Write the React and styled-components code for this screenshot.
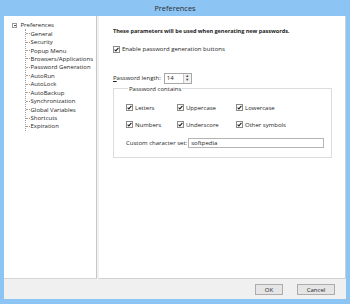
import React from "react";
import styled, { createGlobalStyle } from "styled-components";

const GlobalStyle = createGlobalStyle`
  html, body { margin: 0; padding: 0; }
  body { font-family: "Open Sans", "Noto Sans", sans-serif; color: #1e1e1e; }
  * { box-sizing: border-box; }
`;

const Window = styled.div`
  width: 350px;
  height: 304px;
  background: #8cc4f4;
  display: flex;
  flex-direction: column;
  padding: 0 4px 5px 4px;
`;

const TitleBar = styled.div`
  height: 16px;
  display: flex;
  align-items: center;
  justify-content: center;
  font-size: 7.4px;
  color: #2b2b2b;
`;

const Client = styled.div`
  flex: 1;
  background: #f0f0f0;
  display: flex;
  flex-direction: column;
`;

const Panes = styled.div`
  display: flex;
  height: 263px;
  gap: 2px;
`;

const TreePane = styled.div`
  width: 93px;
  background: #fff;
  border-right: 1px solid #c8c8c8;
  border-bottom: 1px solid #d6d6d6;
  padding: 5px 0 0 8px;
  font-size: 6px;
`;

const TreeRoot = styled.div`
  display: flex;
  align-items: center;
  height: 8.45px;
  gap: 3.5px;
`;

const Expander = styled.span`
  width: 5px;
  height: 5px;
  border: 1px solid #9a9a9a;
  position: relative;
  flex: none;
  &::after {
    content: "";
    position: absolute;
    left: 0.5px;
    right: 0.5px;
    top: 1px;
    height: 1px;
    background: #555;
  }
`;

const TreeChildren = styled.div`
  margin-left: 13px;
  border-left: 1px dotted #a0a0a0;
  display: flex;
  flex-direction: column;
`;

const TreeItem = styled.div`
  height: 8.45px;
  display: flex;
  align-items: center;
  gap: 1px;
  white-space: nowrap;
  &::before {
    content: "";
    width: 3.5px;
    border-top: 1px dotted #a0a0a0;
  }
`;

const ContentPane = styled.div`
  flex: 1;
  background: #fff;
  border-right: 1px solid #d0d0d0;
  border-bottom: 1px solid #d0d0d0;
  padding: 11px 0 0 14px;
  font-size: 6px;
  display: flex;
  flex-direction: column;
`;

const Heading = styled.div`
  font-weight: 700;
  font-size: 5.6px;
  letter-spacing: -0.05px;
  height: 9px;
  line-height: 9px;
`;

const CheckRow = styled.label`
  display: flex;
  align-items: center;
  gap: 2px;
  margin-top: ${(p) => p.$mt || 0}px;
`;

const Box = styled.span`
  width: 7px;
  height: 7px;
  border: 1px solid #8a8a8a;
  background: #fff;
  display: inline-flex;
  align-items: center;
  justify-content: center;
  flex: none;
`;

const Check = () => (
  <Box>
    <svg width="5" height="5" viewBox="0 0 5 5">
      <path d="M0.6 2.6 L1.9 3.9 L4.4 0.8" fill="none" stroke="#222" strokeWidth="1.1" />
    </svg>
  </Box>
);

const LengthRow = styled.div`
  display: flex;
  align-items: center;
  margin-top: 19.5px;
  gap: 3px;
`;

const Under = styled.span`
  text-decoration: underline;
`;

const SpinInput = styled.div`
  display: flex;
  align-items: center;
  height: 11px;
  border: 1px solid #a8a8a8;
  width: 28px;
  padding-left: 2px;
  justify-content: space-between;
`;

const Spinner = styled.div`
  width: 8px;
  height: 9px;
  border-left: 1px solid #c8c8c8;
  display: flex;
  flex-direction: column;
  align-items: center;
  justify-content: space-around;
  background: #f2f2f2;
  font-size: 4px;
  line-height: 4px;
  color: #444;
`;

const Group = styled.fieldset`
  margin: 1px 0 0 0;
  width: 219px;
  height: 73px;
  border: 1px solid #dcdcdc;
  padding: 11px 0 0 12px;
  min-width: 0;
`;

const Legend = styled.legend`
  padding: 0 1px;
  margin-left: 2px;
  font-size: 6px;
`;

const Grid = styled.div`
  display: grid;
  grid-template-columns: 51px 59px 80px;
  row-gap: 9px;
`;

const CustomRow = styled.div`
  display: flex;
  align-items: center;
  margin-top: 9.5px;
  gap: 1px;
`;

const TextBox = styled.div`
  width: 136px;
  height: 10px;
  border: 1px solid #b5b5b5;
  display: flex;
  align-items: center;
  padding-left: 2px;
`;

const Footer = styled.div`
  flex: 1;
  display: flex;
  justify-content: flex-end;
  align-items: flex-start;
  padding: 5px 11px 0 0;
  gap: 14px;
`;

const Button = styled.button`
  width: ${(p) => p.$w}px;
  height: 11px;
  border: 1px solid #acacac;
  background: #e5e5e5;
  font-family: inherit;
  font-size: 6px;
  color: #1e1e1e;
  padding: 0;
  display: flex;
  align-items: center;
  justify-content: center;
`;

const treeItems = [
  "General",
  "Security",
  "Popup Menu",
  "Browsers/Applications",
  "Password Generation",
  "AutoRun",
  "AutoLock",
  "AutoBackup",
  "Synchronization",
  "Global Variables",
  "Shortcuts",
  "Expiration",
];

const options = ["Letters", "Uppercase", "Lowercase", "Numbers", "Underscore", "Other symbols"];

export default function App() {
  return (
    <>
      <GlobalStyle />
      <Window>
        <TitleBar>Preferences</TitleBar>
        <Client>
          <Panes>
            <TreePane>
              <TreeRoot>
                <Expander />
                <span>Preferences</span>
              </TreeRoot>
              <TreeChildren>
                {treeItems.map((t) => (
                  <TreeItem key={t}>{t}</TreeItem>
                ))}
              </TreeChildren>
            </TreePane>
            <ContentPane>
              <Heading>These parameters will be used when generating new passwords.</Heading>
              <CheckRow $mt={9}>
                <Check />
                <span>Enable password generation buttons</span>
              </CheckRow>
              <LengthRow>
                <span>
                  <Under>P</Under>assword length:
                </span>
                <SpinInput>
                  <span>14</span>
                  <Spinner>
                    <span>▲</span>
                    <span>▼</span>
                  </Spinner>
                </SpinInput>
              </LengthRow>
              <Group>
                <Legend>Password contains</Legend>
                <Grid>
                  {options.map((o) => (
                    <CheckRow key={o}>
                      <Check />
                      <span>{o}</span>
                    </CheckRow>
                  ))}
                </Grid>
                <CustomRow>
                  <span>Custom character set:</span>
                  <TextBox>softpedia</TextBox>
                </CustomRow>
              </Group>
            </ContentPane>
          </Panes>
          <Footer>
            <Button $w={28}>OK</Button>
            <Button $w={38}>Cancel</Button>
          </Footer>
        </Client>
      </Window>
    </>
  );
}
